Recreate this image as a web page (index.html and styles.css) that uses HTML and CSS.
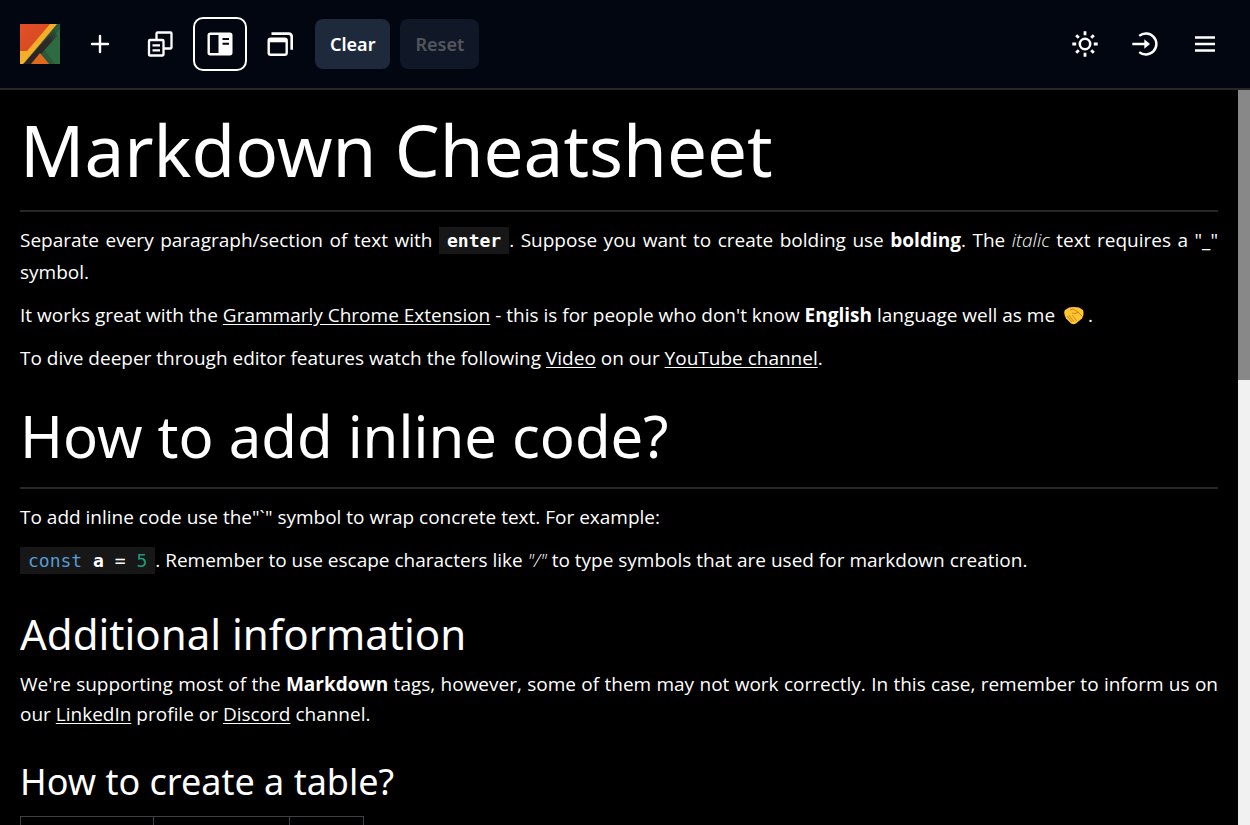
FILE: index.html
```html
<!DOCTYPE html>
<html lang="en">
<head>
<meta charset="utf-8">
<title>Markdown Cheatsheet</title>
<link rel="stylesheet" href="styles.css">
</head>
<body>
<header class="toolbar">
  <div class="group">
    <a class="logo" href="#" aria-label="Home">
      <svg viewBox="0 0 40 40" width="40" height="40">
        <defs>
          <linearGradient id="red" x1="0" y1="0" x2="1" y2="1"><stop offset="0" stop-color="#e2502a"/><stop offset="1" stop-color="#d4481c"/></linearGradient>
          <linearGradient id="dark" x1="0" y1="1" x2="1" y2="0"><stop offset="0" stop-color="#292424"/><stop offset=".7" stop-color="#2d2a29"/><stop offset="1" stop-color="#2b5a3a"/></linearGradient>
        </defs>
        <path fill="#2b5a3a" d="M0 0h40v40H0z"/>
        <path fill="#2f6b41" d="M40 5v35H35L23 24z"/>
        <path fill="url(#red)" d="M0 0h31L7 28H0z"/>
        <path fill="url(#dark)" d="M35 5 37 12 21 30l-9 10H3z"/>
        <path fill="#e2681b" d="M20 29l9 11H11z"/>
        <path fill="#f5ae28" d="M30 0h7L5 38l-2 2H0V27h7z"/>
      </svg>
    </a>
    <button class="icon" aria-label="New document">
      <svg viewBox="0 0 26 26"><path d="M13 5v16M5 13h16" stroke-width="2.400" stroke-linecap="round"/></svg>
    </button>
    <button class="icon" aria-label="Duplicate">
      <svg viewBox="0 0 26 26"><path d="M9.500 8V2.500q0-1 1-1h13q1 0 1 1v14q0 1-1 1h-6M3 9h12.500q1 0 1 1v13.500q0 1-1 1H3q-1 0-1-1V10q0-1 1-1zM5.500 14.300h7.500M5.500 19.300h7.500" stroke-width="2.300"/></svg>
    </button>
    <button class="icon active" aria-label="Split view">
      <svg viewBox="0 0 26 26"><rect x="1.700" y="2.700" width="22.600" height="20.600" rx="1.500" stroke-width="2.400"/><path d="M11.500 3h13v20h-13z" fill="currentColor" stroke="none"/><path class="cut" d="M15.500 8h6.500M15.500 12.800h6.500" stroke-width="2"/></svg>
    </button>
    <button class="icon" aria-label="Windows">
      <svg viewBox="0 0 26 26"><rect x="1.700" y="7.700" width="18" height="16" rx="2" stroke-width="2.400"/><path d="M2 9.300h18" stroke-width="4"/><path d="M4.500 2.600h17q3.200 0 3.200 3.200v13" stroke-width="2.600"/></svg>
    </button>
    <div class="actions">
      <button class="btn">Clear</button>
      <button class="btn" disabled>Reset</button>
    </div>
  </div>
  <div class="group">
    <button class="icon" aria-label="Light theme">
      <svg viewBox="0 0 26 26"><circle cx="13" cy="13" r="5.200" stroke-width="2.500"/><path d="M13 .3v3.900M13 21.800v3.900M.3 13h3.900M21.800 13h3.900M4.200 4.200l2.600 2.600M19.200 19.200l2.600 2.600M21.800 4.200l-2.600 2.600M6.800 19.200l-2.600 2.600" stroke-width="2.800"/></svg>
    </button>
    <button class="icon" aria-label="Sign in">
      <svg viewBox="0 0 26 26"><path d="M7.200 4.900A10.500 10.500 0 1 1 7.200 21.100" stroke-width="2.500"/><path d="M.3 13h13" stroke-width="2.500"/><path d="M12.300 8.200l5.700 4.800-5.700 4.800z" fill="currentColor" stroke="none"/></svg>
    </button>
    <button class="icon" aria-label="Menu">
      <svg viewBox="0 0 26 26"><path d="M3 6.500h20M3 13h20M3 19.500h20" stroke-width="2.600"/></svg>
    </button>
  </div>
</header>
<main class="preview">
  <h1>Markdown Cheatsheet</h1>
  <p>Separate every paragraph/section of text with <code><b>enter</b></code>. Suppose you want to create bolding use <strong>bolding</strong>. The <em>italic</em> text requires a "_" symbol.</p>
  <p>It works great with the <a href="#">Grammarly Chrome Extension</a> - this is for people who don't know <strong>English</strong> language well as me <svg class="emoji" viewBox="0 0 20 18" role="img" aria-label="handshake"><path fill="#ffc533" d="M5 .5q5-1 10 0l4 2.500q1.500 5-1 8.500l-6 5q-2.500 1.500-5 0l-5-5Q-1 6 1 3z"/><path d="M6 3l3-1 5 3 5 5M3 9l5 6M5 8l5 7M8 8l5 6M14 5q-3 3-6 1" fill="none" stroke="#d38516"/></svg>.</p>
  <p>To dive deeper through editor features watch the following <a href="#">Video</a> on our <a href="#">YouTube channel</a>.</p>
  <h2>How to add inline code?</h2>
  <p>To add inline code use the"`" symbol to wrap concrete text. For example:</p>
  <p><code><span class="keyword">const</span> <b>a</b> = <span class="number">5</span></code>. Remember to use escape characters like <em>"/"</em> to type symbols that are used for markdown creation.</p>
  <h3>Additional information</h3>
  <p class="snug">We're supporting most of the <strong>Markdown</strong> tags, however, some of them may not work correctly. In this case, remember to inform us on our <a href="#">LinkedIn</a> profile or <a href="#">Discord</a> channel.</p>
  <h4>How to create a table?</h4>
  <table><tbody><tr><td></td><td></td><td></td></tr></tbody></table>
</main>
</body>
</html>
```
FILE: styles.css
```css
* { box-sizing: border-box; }
body {
  margin: 0;
  height: 100vh;
  display: flex;
  flex-direction: column;
  background: #000;
  color: #fff;
  font: 19px/32px "Segoe UI", "Open Sans", sans-serif;
}
.toolbar {
  flex: none;
  display: flex;
  justify-content: space-between;
  align-items: center;
  height: 90px;
  padding: 0 18px 0 20px;
  background: #020611;
  border-bottom: 2px solid #27272a;
}
.group { display: flex; align-items: center; gap: 6px; }
.logo { display: flex; margin-right: 7px; }
.icon {
  width: 54px;
  height: 54px;
  padding: 0;
  display: grid;
  place-items: center;
  color: #fff;
  background: none;
  border: 2px solid transparent;
  border-radius: 10px;
}
.icon svg { width: 26px; height: 26px; fill: none; stroke: currentColor; }
.icon.active { border-color: #fff; }
.icon .cut { stroke: #020611; }
.actions { display: flex; gap: 10px; margin-left: 2px; }
.btn {
  height: 50px;
  padding: 0 15px;
  border: 0;
  border-radius: 8px;
  background: #1e293b;
  color: #fff;
  font: 600 18px/24px "Segoe UI", "Noto Sans", sans-serif;
}
.btn:disabled { opacity: .5; color: #a3a3a8; }
.preview {
  flex: 1;
  min-height: 0;
  overflow: hidden;
  padding: 10px 20px 0;
  text-align: justify;
  border-right: 12px solid;
  border-image: linear-gradient(#888 290px, #f1f1f1 290px) 1;
  border-width: 0 12px 0 0;
}
h1, h2, h3, h4, p { margin: 0; }
h1, h2, h3, h4 { font-family: "Segoe UI", "Noto Sans", sans-serif; font-weight: 400; text-align: left; }
h1 { font-size: 71px; line-height: 100px; padding-bottom: 10px; border-bottom: 2px solid #27272a; margin-bottom: 12px; }
h2 { font-size: 58px; line-height: 80px; margin-top: 22px; padding-bottom: 11px; border-bottom: 2px solid #27272a; margin-bottom: 12px; }
h3 { font-size: 42px; line-height: 60px; margin-top: 28px; margin-bottom: 5px; }
h4 { font-size: 36px; line-height: 50px; margin-top: 28px; margin-bottom: 9px; }
p { margin-bottom: 11px; }
.snug { line-height: 30px; }
a { color: inherit; text-underline-offset: 2px; }
strong { font-weight: 700; }
em { font-weight: 300; }
code { padding: 3px 8px; background: #171717; font: 18px/22px "DejaVu Sans Mono", monospace; }
.keyword { color: #569cd6; }
.number { color: #1f9a75; }
.emoji { width: 22px; height: 18px; vertical-align: -3px; margin: 0 3px; }
table { border-collapse: collapse; }
td { width: 136px; height: 40px; border: 1px solid #3f3f46; }
td:first-child { width: 133px; }
td:last-child { width: 74px; }
```
